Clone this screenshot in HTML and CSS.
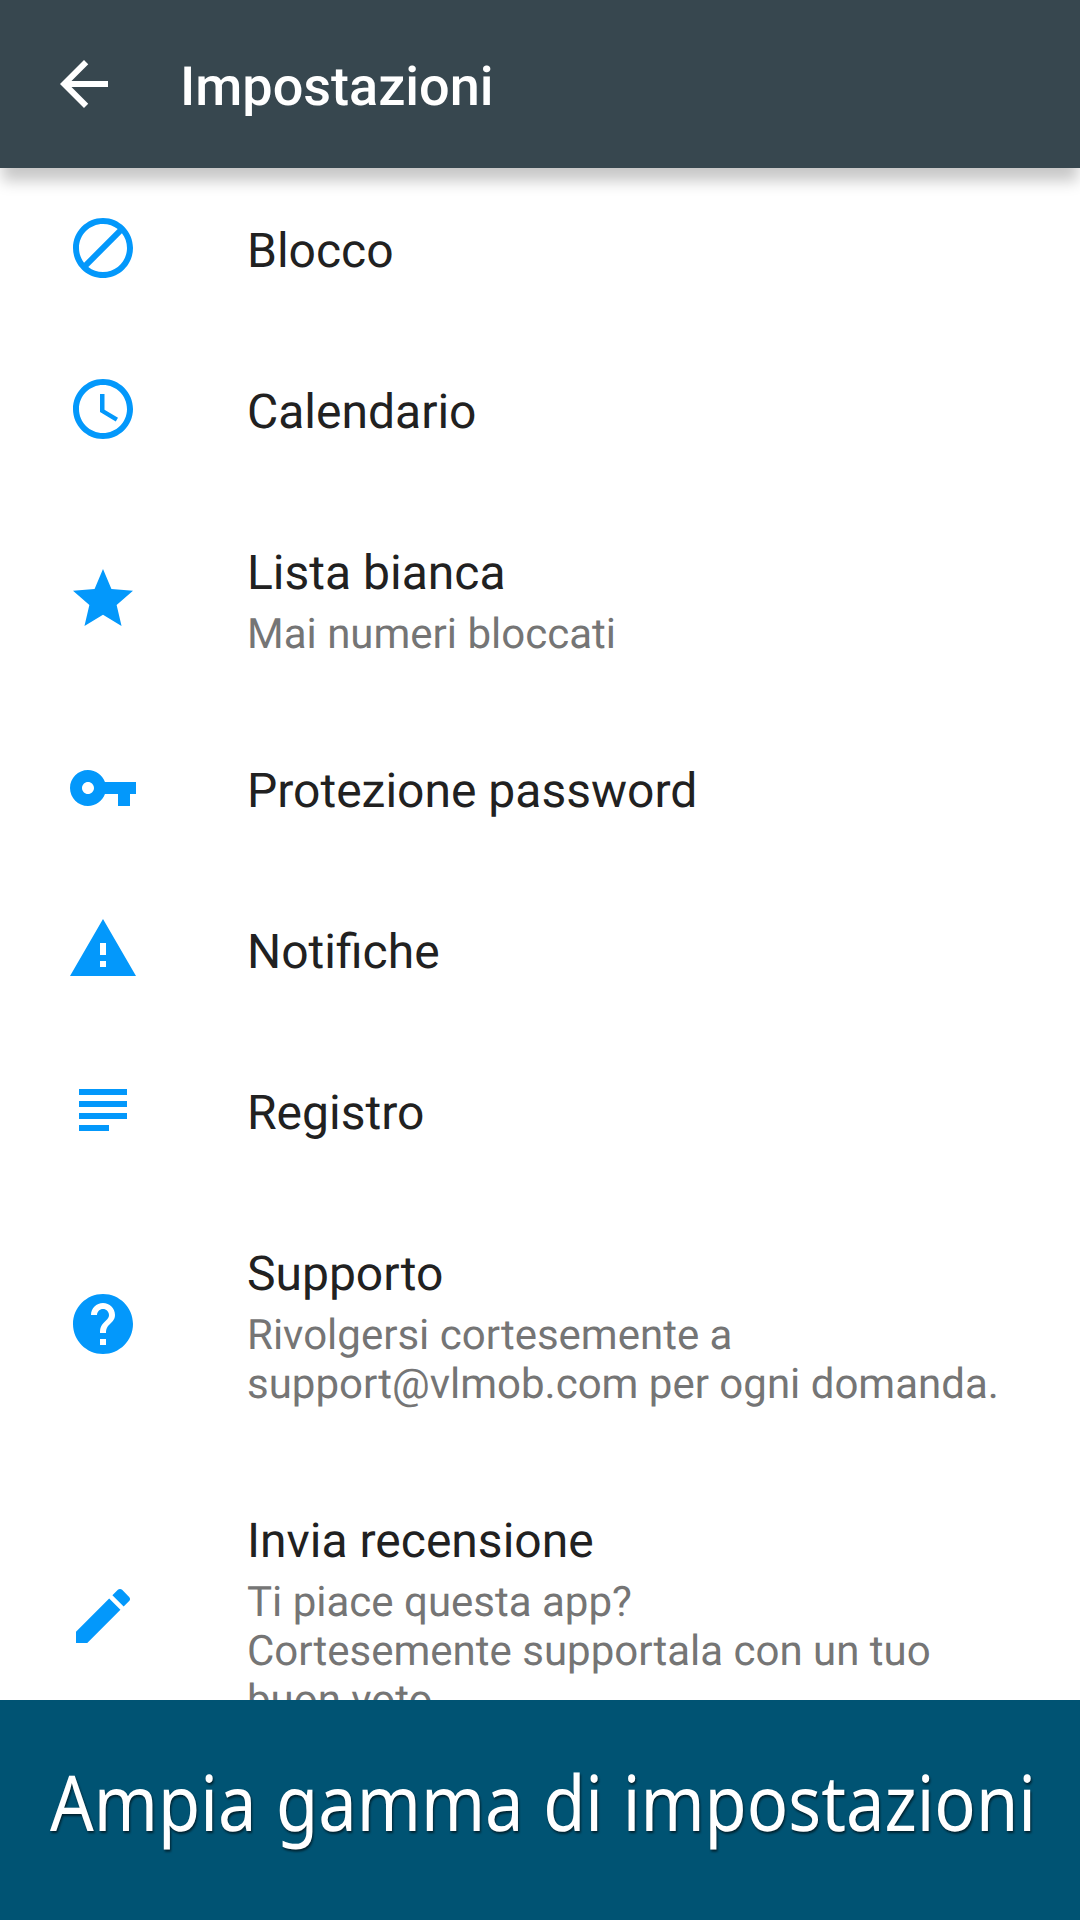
FILE: index.html
```html
<!DOCTYPE html>
<html lang="it">
<head>
<meta charset="utf-8">
<title>Impostazioni</title>
<link rel="stylesheet" href="styles.css">
</head>
<body>
<div class="screen">
<header class="appbar">
<svg class="back" viewBox="0 0 24 24"><path d="M20 11H7.83l5.59-5.59L12 4l-8 8 8 8 1.41-1.41L7.83 13H20v-2z"/></svg>
<h1 class="title">Impostazioni</h1>
</header>
<main class="list">
<div class="row"><svg class="icon" viewBox="0 0 24 24"><path fill-rule="evenodd" d="M12 2C6.48 2 2 6.48 2 12s4.480 10 10 10 10-4.480 10-10S17.520 2 12 2zM4 12c0-4.420 3.580-8 8-8 1.850 0 3.550.630 4.900 1.690L5.690 16.900C4.630 15.550 4 13.850 4 12zm8 8c-1.850 0-3.550-.630-4.900-1.690L18.310 7.100C19.370 8.450 20 10.150 20 12c0 4.420-3.580 8-8 8z"/></svg><div class="text"><div class="name">Blocco</div></div></div>
<div class="row"><svg class="icon" viewBox="0 0 24 24"><path fill-rule="evenodd" d="M11.990 2C6.470 2 2 6.480 2 12s4.470 10 9.990 10C17.520 22 22 17.520 22 12S17.520 2 11.990 2zM12 20c-4.420 0-8-3.580-8-8s3.580-8 8-8 8 3.580 8 8-3.580 8-8 8zM12.500 7H11v6l5.250 3.150.750-1.230-4.500-2.670z"/></svg><div class="text"><div class="name">Calendario</div></div></div>
<div class="row"><svg class="icon" viewBox="0 0 24 24"><path d="M12 17.270L18.180 21l-1.640-7.030L22 9.240l-7.190-.610L12 2 9.190 8.630 2 9.240l5.460 4.730L5.820 21z"/></svg><div class="text"><div class="name">Lista bianca</div><div class="summary">Mai numeri bloccati</div></div></div>
<div class="row"><svg class="icon" viewBox="0 0 24 24"><path d="M12.650 10C11.830 7.670 9.610 6 7 6c-3.310 0-6 2.690-6 6s2.690 6 6 6c2.610 0 4.830-1.670 5.650-4H17v4h4v-4h2v-4H12.650zM7 14c-1.100 0-2-.9-2-2s.9-2 2-2 2 .9 2 2-.9 2-2 2z"/></svg><div class="text"><div class="name">Protezione password</div></div></div>
<div class="row"><svg class="icon" viewBox="0 0 24 24"><path d="M1 21h22L12 2 1 21zm12-3h-2v-2h2v2zm0-4h-2v-4h2v4z"/></svg><div class="text"><div class="name">Notifiche</div></div></div>
<div class="row"><svg class="icon" viewBox="0 0 24 24"><path d="M14 17H4v2h10v-2zm6-8H4v2h16V9zM4 15h16v-2H4v2zM4 5v2h16V5H4z"/></svg><div class="text"><div class="name">Registro</div></div></div>
<div class="row"><svg class="icon" viewBox="0 0 24 24"><path d="M12 2C6.480 2 2 6.480 2 12s4.480 10 10 10 10-4.480 10-10S17.520 2 12 2zm1 17h-2v-2h2v2zm2.070-7.750l-.9.920C13.450 12.900 13 13.500 13 15h-2v-.5c0-1.100.450-2.100 1.170-2.830l1.240-1.260c.370-.360.590-.860.590-1.410 0-1.100-.9-2-2-2s-2 .9-2 2H8c0-2.210 1.790-4 4-4s4 1.790 4 4c0 .880-.360 1.680-.930 2.250z"/></svg><div class="text"><div class="name">Supporto</div><div class="summary">Rivolgersi cortesemente a<br>support@vlmob.com per ogni domanda.</div></div></div>
<div class="row"><svg class="icon" viewBox="0 0 24 24"><path d="M3 17.250V21h3.750L17.810 9.940l-3.750-3.750L3 17.250zM20.710 7.040c.390-.390.390-1.020 0-1.410l-2.340-2.340c-.390-.390-1.020-.390-1.410 0l-1.830 1.830 3.750 3.750 1.830-1.830z"/></svg><div class="text"><div class="name">Invia recensione</div><div class="summary">Ti piace questa app?<br>Cortesemente supportala con un tuo<br>buon voto.</div></div></div>
</main>
<footer class="banner"><svg class="caption" viewBox="0 0 1080 220"><text x="50" y="131" textLength="986" lengthAdjust="spacingAndGlyphs">Ampia gamma di impostazioni</text></svg></footer>
</div>
</body>
</html>
```
FILE: styles.css
```css
* { box-sizing: border-box; }
body { margin: 0; font-family: Roboto, sans-serif; background: #fff; text-rendering: geometricPrecision; }
.screen { width: 1080px; height: 1920px; display: flex; flex-direction: column; overflow: hidden; }
.appbar { position: relative; flex: 0 0 168px; display: flex; align-items: center; padding: 0 0 0 48px; background: #37474f; box-shadow: 0 15px 14px -2px rgba(0,0,0,.22); }
.back { width: 72px; height: 72px; fill: #fff; }
.title { margin: 8px 0 0 60px; color: #fff; font-size: 54px; line-height: 64px; font-weight: 500; }
.list { flex: 1 1 0; min-height: 0; overflow: hidden; padding-top: 1px; }
.row { display: flex; align-items: center; padding: 51px 24px 48px 67px; }
.icon { flex: none; width: 72px; height: 72px; margin: -10px 108px -4px 0; fill: #0398fb; }
.name { font-size: 48px; line-height: 62px; color: #212121; white-space: nowrap; }
.summary { padding: 6px 0 2px; font-size: 42px; line-height: 49px; color: #757575; white-space: nowrap; }
.banner { flex: 0 0 220px; background: #005373; }
.caption { display: block; width: 1080px; height: 220px; font-family: "Noto Sans", sans-serif; font-size: 77px; word-spacing: 2px; fill: #fff; filter: drop-shadow(1px 2px 1px rgba(0,0,0,.6)); }
```
